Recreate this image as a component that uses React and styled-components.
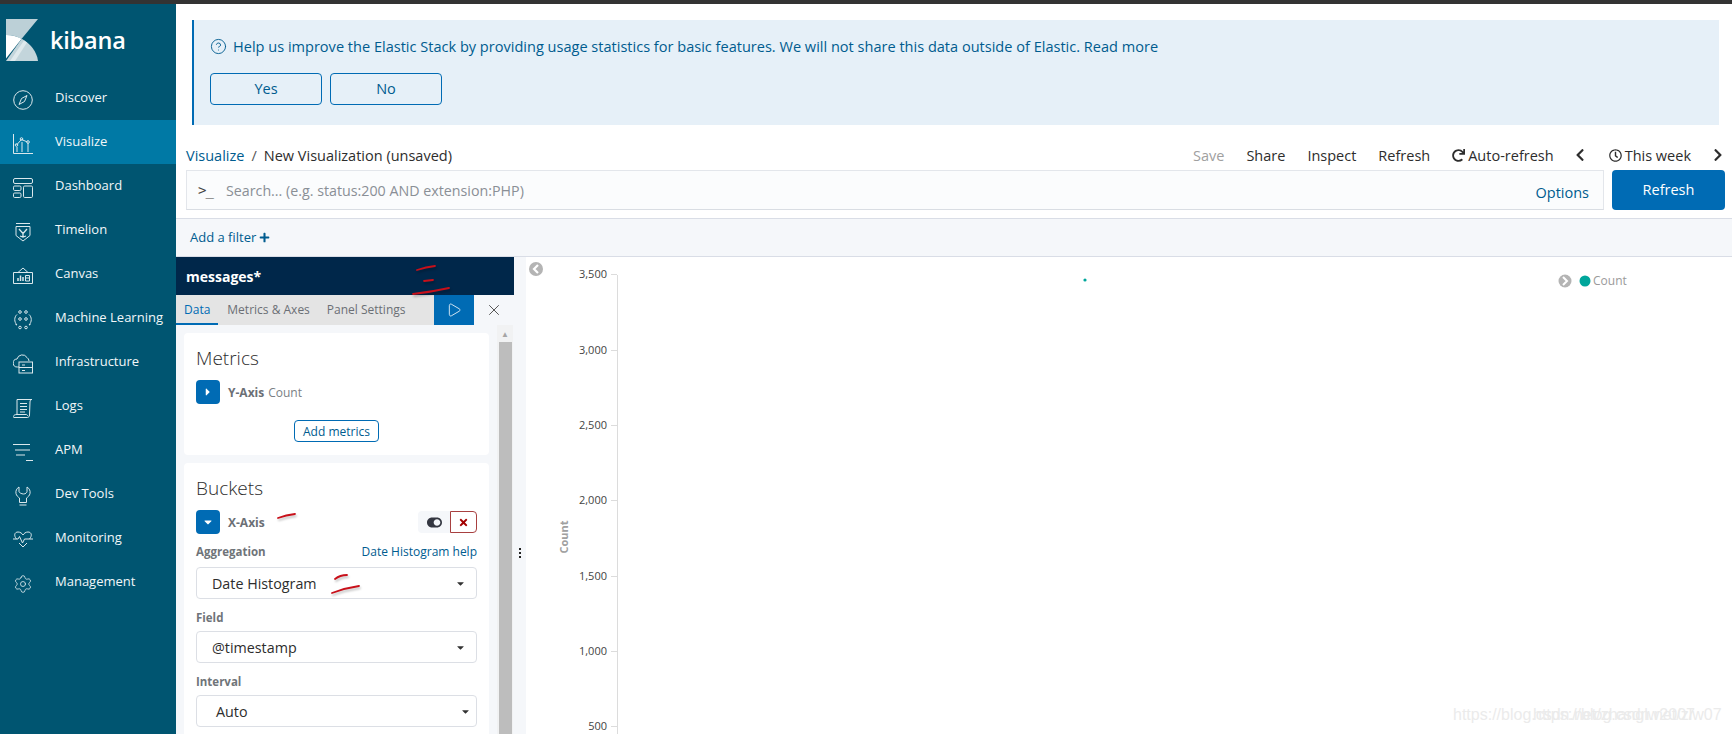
import React from 'react'
import styled, { createGlobalStyle } from 'styled-components'
import { FaCaretDown, FaCaretRight, FaChevronLeft, FaChevronRight, FaPlus, FaRedo, FaRegClock, FaTimes, FaToggleOn } from 'react-icons/fa'
import { CircleHelp, Play, Settings, X } from 'lucide-react'

const GlobalStyle = createGlobalStyle`
html, body { margin: 0; padding: 0; background: #fff; overflow: hidden; }
body { font-family: "Open Sans", "Liberation Sans", sans-serif; color: #2d2d2d; }
`

const Page = styled.div`
position: relative;
width: 1732px;
height: 734px;
overflow: hidden;
display: flex;
flex-direction: column;
`
const TopStrip = styled.div`
height: 4px;
flex: none;
background: #333;
`
const Body = styled.div`
flex: 1;
min-height: 0;
display: flex;
`
const Sidebar = styled.nav`
width: 176px;
flex: none;
background: #005571;
`
const Brand = styled.div`
height: 72px;
display: flex;
align-items: center;
padding-left: 6px;
gap: 12px;
color: #fff;
font-size: 23.5px;
font-weight: 600;
letter-spacing: -0.2px;
`
const NavItem = styled.div`
height: 44px;
box-sizing: border-box;
padding: 0 0 2px 13px;
display: flex;
align-items: center;
gap: 22px;
font-size: 13px;
color: #f2f7f9;
background: ${({ $active }) => ($active ? '#0079a5' : 'transparent')};
svg { flex: none; margin-top: 5px; color: #dbe8ec; }
`
const Main = styled.main`
flex: 1;
min-width: 0;
display: flex;
flex-direction: column;
`
const NoticeWrap = styled.div`
padding: 16px 13px 0 16px;
`
const Notice = styled.div`
height: 105px;
box-sizing: border-box;
border-left: 2px solid #006bb4;
background: #e6f0f8;
padding: 16px 0 0 16px;
`
const NoticeText = styled.div`
display: flex;
align-items: center;
gap: 6px;
height: 20px;
font-size: 14.55px;
color: #005c8f;
`
const NoticeActions = styled.div`
display: flex;
gap: 8px;
margin-top: 17px;
`
const NoticeButton = styled.button`
width: 112px;
height: 32px;
padding: 0 0 2px;
border: 1px solid #006bb4;
border-radius: 4px;
background: transparent;
color: #005c8f;
font: 14.5px "Open Sans", sans-serif;
`
const TopRow = styled.div`
height: 20px;
margin-top: 20px;
padding: 0 7px 0 10px;
display: flex;
align-items: center;
justify-content: space-between;
font-size: 14.5px;
`
const Crumbs = styled.div`
display: flex;
align-items: center;
gap: 7px;
`
const CrumbLink = styled.span`
color: #005c8f;
`
const CrumbSep = styled.span`
color: #555;
`
const Menu = styled.div`
display: flex;
align-items: center;
gap: 22px;
`
const MenuItem = styled.span`
display: flex;
align-items: center;
gap: 3px;
margin-left: ${({ $pull }) => $pull || 0}px;
color: ${({ $muted }) => ($muted ? '#a0a0a0' : '#2d2d2d')};
`
const SearchRow = styled.div`
display: flex;
gap: 8px;
height: 40px;
margin-top: 5px;
padding: 0 7px 0 10px;
`
const SearchBox = styled.div`
flex: 1;
display: flex;
align-items: center;
box-sizing: border-box;
border: 1px solid #e3e6eb;
border-bottom-color: #d9dde3;
background: #fbfcfd;
padding: 0 14px 0 11px;
font-size: 14.25px;
color: #8a8f96;
`
const Prompt = styled.span`
width: 28px;
flex: none;
color: #444;
font: 14px "DejaVu Sans Mono", monospace;
letter-spacing: -1px;
`
const OptionsLink = styled.span`
margin-left: auto;
padding-top: 4px;
font-size: 14.5px;
color: #005c8f;
`
const RefreshButton = styled.button`
width: 113px;
padding: 0 0 2px;
border: 0;
border-radius: 4px;
background: #006bb4;
color: #fff;
font: 14.5px "Open Sans", sans-serif;
`
const FilterBar = styled.div`
height: 37px;
flex: none;
box-sizing: content-box;
margin-top: 8px;
display: flex;
align-items: center;
gap: 3px;
padding: 0 0 0 14px;
background: #f5f7fa;
border-top: 1px solid #d9dde6;
border-bottom: 1px solid #d9dde6;
color: #005c8f;
font-size: 13px;
span { padding-bottom: 2px; }
svg { margin-bottom: 1px; }
`
const Editor = styled.div`
flex: 1;
min-height: 0;
display: flex;
`
const Panel = styled.section`
width: 338px;
flex: none;
display: flex;
flex-direction: column;
background: #f5f7fa;
`
const PanelHead = styled.div`
height: 38px;
flex: none;
display: flex;
align-items: center;
padding-left: 10px;
background: #00274a;
color: #fff;
font-size: 14px;
font-weight: 700;
`
const TabRow = styled.div`
height: 30px;
flex: none;
display: flex;
`
const TabStrip = styled.div`
width: 258px;
display: flex;
background: #e4e4e4;
font-size: 12px;
`
const Tab = styled.div`
display: flex;
align-items: center;
padding: 0 8px;
margin-right: 1px;
color: ${({ $active }) => ($active ? '#006bb4' : '#6b6f75')};
border-bottom: 2px solid ${({ $active }) => ($active ? '#006bb4' : 'transparent')};
`
const RunButton = styled.div`
width: 40px;
display: flex;
align-items: center;
justify-content: center;
background: #006bb4;
color: #dcebf5;
`
const CloseButton = styled.div`
width: 40px;
display: flex;
align-items: center;
justify-content: center;
color: #444;
`
const PanelBody = styled.div`
flex: 1;
min-height: 0;
display: flex;
`
const Cards = styled.div`
width: 305px;
flex: none;
padding: 8px;
display: flex;
flex-direction: column;
gap: 8px;
`
const Card = styled.div`
background: #fff;
border-radius: 4px;
padding: 12px 12px 13px;
`
const CardTitle = styled.h2`
margin: 0;
font-size: 19px;
line-height: 26px;
font-weight: 300;
color: #2d2d2d;
`
const AxisRow = styled.div`
display: flex;
align-items: center;
gap: 8px;
height: 24px;
margin-top: 9px;
font-size: 12px;
color: #7a7f85;
b { color: #6b6f75; font-weight: 700; margin-right: 4px; }
`
const ExpandButton = styled.div`
width: 24px;
height: 24px;
border-radius: 4px;
background: #006bb4;
color: #fff;
display: flex;
align-items: center;
justify-content: center;
font-size: 12px;
`
const AddButton = styled.button`
display: block;
width: 85px;
height: 22px;
margin: 16px auto 0;
padding: 0;
border: 1px solid #006bb4;
border-radius: 4px;
background: #fff;
color: #005c8f;
font: 12px "Open Sans", sans-serif;
`
const RowTools = styled.div`
margin-left: auto;
display: flex;
height: 22px;
`
const ToggleTool = styled.div`
width: 32px;
display: flex;
align-items: center;
justify-content: center;
background: #f5f7fa;
border-radius: 4px 0 0 4px;
color: #343741;
font-size: 15px;
`
const DeleteTool = styled.div`
width: 27px;
box-sizing: border-box;
display: flex;
align-items: center;
justify-content: center;
border: 1px solid #a84040;
border-radius: 0 4px 4px 0;
color: #a30000;
font-size: 11px;
`
const LabelRow = styled.div`
display: flex;
justify-content: space-between;
align-items: center;
height: 18px;
margin-top: ${({ $top }) => $top}px;
margin-bottom: ${({ $bottom }) => $bottom}px;
font-size: 11.5px;
font-weight: 700;
color: #6f7479;
`
const HelpLink = styled.span`
font-size: 12px;
font-weight: 400;
color: #005c8f;
`
const SelectBox = styled.div`
height: 32px;
box-sizing: border-box;
display: flex;
align-items: center;
padding: 0 ${({ $right }) => $right}px 0 ${({ $inset }) => $inset}px;
border: 1px solid #dcdfe5;
border-radius: 4px;
background: #fff;
font-size: 14.3px;
color: #2d2d2d;
svg { margin-left: auto; font-size: 11px; color: #333; }
`
const Track = styled.div`
width: 16px;
flex: none;
background: #f1f2f3;
display: flex;
flex-direction: column;
align-items: center;
`
const TrackArrow = styled.div`
height: 17px;
flex: none;
display: flex;
align-items: center;
justify-content: center;
color: #a5a5a5;
font-size: 8px;
`
const TrackThumb = styled.div`
width: 13px;
flex: 1;
background: #bdbdbd;
`
const Gutter = styled.div`
width: 12px;
flex: none;
display: flex;
align-items: center;
justify-content: center;
padding-top: 114px;
box-sizing: border-box;
background: #f5f7fa;
`
const GutterDots = styled.div`
width: 2px;
height: 12px;
background: radial-gradient(circle, #222 1px, transparent 1.2px) 0 0 / 2px 4px;
`
const Chart = styled.div`
flex: 1;
min-width: 0;
position: relative;
background: #fff;
svg { display: block; }
`
const Watermark = styled.span`
position: absolute;
top: ${({ $top }) => $top}px;
left: ${({ $left }) => $left}px;
font: 16px "Liberation Sans", sans-serif;
color: #ebebeb;
white-space: nowrap;
`
const Scribbles = styled.svg`
position: absolute;
inset: 0;
pointer-events: none;
filter: drop-shadow(1px 2px 1px rgba(0, 0, 0, 0.25));
`

const Icon = ({ children }) => (
  <svg width="20" height="20" viewBox="0 0 20 20" fill="none" stroke="currentColor" strokeWidth="1">{children}</svg>
)

const navIcons = {
  discover: <Icon><circle cx="10" cy="10" r="9.3" /><path d="M14 5.5 11.5 11.5 6 14.5 8.5 8.5Z" /></Icon>,
  visualize: <Icon><path d="M.5 0v19.5H20M4 18v-5M9 18V8M15 18V9" /><path d="M3.5 11 8.500 5.500l6 2.500" /><circle cx="3.500" cy="11" r="1.300" /><circle cx="8.500" cy="5" r="1.300" /><circle cx="15" cy="8" r="1.300" /></Icon>,
  dashboard: <Icon><rect x=".5" y=".5" width="19" height="5" rx="1.500" /><rect x=".5" y="8" width="7.500" height="4.500" rx="1.200" /><rect x=".5" y="15" width="7.500" height="4.500" rx="1.200" /><rect x="10.500" y="8" width="9" height="11.500" rx="1.200" /></Icon>,
  timelion: <Icon><path d="M3 1.500h14M3 4.500h14v9l-7 5.500-7-5.500z" /><path d="M6 7l4 4.500L14 7M10 11.500V15M7 14l3 1 3-1" strokeWidth="1.300" /></Icon>,
  canvas: <Icon><path d="M.5 6.500h19v11h-19zM5 6.500 10 2l5 4.500" /><path d="M5 15v-3M7.500 15V9.500M10 15v-4" strokeWidth="1.500" /><path d="M12.500 9.500h4v5.500h-4zM12.500 12h4" /></Icon>,
  ml: <Icon><circle cx="7" cy="2" r="1.300" /><circle cx="13" cy="2" r="1.300" /><circle cx="7" cy="9" r="1.300" /><circle cx="13" cy="9" r="1.300" /><circle cx="7" cy="17.500" r="1.300" /><circle cx="13" cy="17.500" r="1.300" /><path d="M4 4.500C1 7 1 12 4 15M16 4.500c3 2.500 3 7.500 0 10.500M4 15l-1.500-.5M16 15l1.500-.5" /></Icon>,
  infra: <Icon><path d="M6 13H4.500a4 4 0 0 1-.5-8A5.500 5.500 0 0 1 14 3.500a4.500 4.500 0 0 1 2 3.500" /><rect x="6" y="8" width="13.500" height="11" /><path d="M6 13.500h13.500M9 11h3M9 16.500h3" /></Icon>,
  logs: <Icon><path d="M4 16V1.500h15c-1.500 0-2 1-2 2.500l-.5 13c0 1.500-1 2.500-2 2.500H1c-.5 0-1-.5-.5-1.500C1 17 2 16.500 4 16.500h9.500c.5 0 1 .5 1 1.500" /><path d="M7 5.500h7M7 8.500h7M7 11.500h7M7 14h5" /></Icon>,
  apm: <Icon><path d="M0 2.500h17M2 8h15M3 13h9M13 18.500h7" /></Icon>,
  dev: <Icon><path d="M6 1C3.500 2.500 2.500 5 3 7.500c.4 2 2 3.500 3.500 4.500v4.500h7V12c1.500-1 3.100-2.500 3.500-4.500.5-2.500-.5-5-3-6.500v4.500c0 1-1.500 2.500-3.500 2.500S6 6.500 6 5.500zM6.500 19h7" /></Icon>,
  monitoring: <Icon><path d="M0 9h5l1.500-2.500 3 6.500 2-4h8.500M3.500 9C.5 5.500 1.500 2 5 2c2.500 0 4 1.500 5 3 1-1.500 2.500-3 5-3 3.500 0 4.500 3.500 1.500 7M6 13l4 4 4-4" /></Icon>,
  management: <Settings size={20} strokeWidth={1} />,
}

const navItems = [
  ['Discover', 'discover'],
  ['Visualize', 'visualize'],
  ['Dashboard', 'dashboard'],
  ['Timelion', 'timelion'],
  ['Canvas', 'canvas'],
  ['Machine Learning', 'ml'],
  ['Infrastructure', 'infra'],
  ['Logs', 'logs'],
  ['APM', 'apm'],
  ['Dev Tools', 'dev'],
  ['Monitoring', 'monitoring'],
  ['Management', 'management'],
]

const Logo = () => (
  <svg width="32" height="42" viewBox="0 0 32 42">
    <path d="M0 0h32L15.700 19.800C11 17 5.500 15.800 0 15.900z" fill="#bcd0d7" />
    <path d="M0 15.900c5.500-.1 11 1.100 15.700 3.900L0 39.500z" fill="#fff" />
    <path d="M0 42h32C31 33 24.500 24.800 15.700 19.800z" fill="#c3d5db" />
    <path d="M4 42 18 21.500l3 2L9 42z" fill="#dfe9ec" />
  </svg>
)

const ticks = [
  ['3,500', 17],
  ['3,000', 93],
  ['2,500', 168],
  ['2,000', 243],
  ['1,500', 319],
  ['1,000', 394],
  ['500', 469],
]

const ChartPlot = () => (
  <svg width="1206" height="477" fontFamily='"Open Sans", sans-serif'>
    <circle cx="10" cy="12" r="7" fill="#b4b4b4" />
    <path d="M12 8 8 12l4 4" stroke="#fff" strokeWidth="2.200" fill="none" />
    <path d="M91.500 18V477" stroke="#dcdcdc" />
    {ticks.map(([label, y]) => (
      <g key={label}>
        <path d={`M85 ${y + 0.5}h6`} stroke="#dcdcdc" />
        <text x="81" y={y + 4} textAnchor="end" fontSize="11" fill="#444">{label}</text>
      </g>
    ))}
    <text transform="translate(42 280) rotate(-90)" textAnchor="middle" fontSize="11" fontWeight="700" fill="#a0a0a0">Count</text>
    <circle cx="559" cy="23" r="1.600" fill="#00a69b" />
    <circle cx="1039" cy="24" r="6.500" fill="#b4b4b4" />
    <path d="M1037 20l4 4-4 4" stroke="#fff" strokeWidth="2" fill="none" />
    <circle cx="1059" cy="24" r="5.500" fill="#00a69b" />
    <text x="1067" y="28" fontSize="12" fill="#9a9a9a">Count</text>
  </svg>
)

export default function App() {
  return (
    <Page>
      <GlobalStyle />
      <TopStrip />
      <Body>
        <Sidebar>
          <Brand><Logo />kibana</Brand>
          {navItems.map(([label, key]) => (
            <NavItem key={key} $active={key === 'visualize'}>{navIcons[key]}{label}</NavItem>
          ))}
        </Sidebar>
        <Main>
          <NoticeWrap>
            <Notice>
              <NoticeText>
                <CircleHelp size={17} strokeWidth={1.300} />
                Help us improve the Elastic Stack by providing usage statistics for basic features. We will not share this data outside of Elastic. Read more
              </NoticeText>
              <NoticeActions>
                <NoticeButton>Yes</NoticeButton>
                <NoticeButton>No</NoticeButton>
              </NoticeActions>
            </Notice>
          </NoticeWrap>
          <TopRow>
            <Crumbs>
              <CrumbLink>Visualize</CrumbLink>
              <CrumbSep>/</CrumbSep>
              <span>New Visualization (unsaved)</span>
            </Crumbs>
            <Menu>
              <MenuItem $muted>Save</MenuItem>
              <MenuItem>Share</MenuItem>
              <MenuItem>Inspect</MenuItem>
              <MenuItem>Refresh</MenuItem>
              <MenuItem><FaRedo size={13} />Auto-refresh</MenuItem>
              <MenuItem $pull={-3}><FaChevronLeft size={14} /></MenuItem>
              <MenuItem><FaRegClock size={13} />This week</MenuItem>
              <MenuItem $pull={-2}><FaChevronRight size={14} /></MenuItem>
            </Menu>
          </TopRow>
          <SearchRow>
            <SearchBox>
              <Prompt>&gt;_</Prompt>
              Search... (e.g. status:200 AND extension:PHP)
              <OptionsLink>Options</OptionsLink>
            </SearchBox>
            <RefreshButton>Refresh</RefreshButton>
          </SearchRow>
          <FilterBar><span>Add a filter</span><FaPlus size={11} /></FilterBar>
          <Editor>
            <Panel>
              <PanelHead>messages*</PanelHead>
              <TabRow>
                <TabStrip>
                  <Tab $active>Data</Tab>
                  <Tab>Metrics &amp; Axes</Tab>
                  <Tab>Panel Settings</Tab>
                </TabStrip>
                <RunButton><Play size={16} strokeWidth={1.400} /></RunButton>
                <CloseButton><X size={18} strokeWidth={1.200} /></CloseButton>
              </TabRow>
              <PanelBody>
                <Cards>
                  <Card>
                    <CardTitle>Metrics</CardTitle>
                    <AxisRow>
                      <ExpandButton><FaCaretRight /></ExpandButton>
                      <span><b>Y-Axis</b>Count</span>
                    </AxisRow>
                    <AddButton>Add metrics</AddButton>
                  </Card>
                  <Card>
                    <CardTitle>Buckets</CardTitle>
                    <AxisRow>
                      <ExpandButton><FaCaretDown /></ExpandButton>
                      <b>X-Axis</b>
                      <RowTools>
                        <ToggleTool><FaToggleOn /></ToggleTool>
                        <DeleteTool><FaTimes /></DeleteTool>
                      </RowTools>
                    </AxisRow>
                    <LabelRow $top={8} $bottom={7}>Aggregation<HelpLink>Date Histogram help</HelpLink></LabelRow>
                    <SelectBox $inset={15} $right={10}>Date Histogram<FaCaretDown /></SelectBox>
                    <LabelRow $top={9} $bottom={5}>Field</LabelRow>
                    <SelectBox $inset={15} $right={10}>@timestamp<FaCaretDown /></SelectBox>
                    <LabelRow $top={9} $bottom={5}>Interval</LabelRow>
                    <SelectBox $inset={19} $right={5}>Auto<FaCaretDown /></SelectBox>
                  </Card>
                </Cards>
                <Track>
                  <TrackArrow>&#9650;</TrackArrow>
                  <TrackThumb />
                </Track>
              </PanelBody>
            </Panel>
            <Gutter><GutterDots /></Gutter>
            <Chart>
              <ChartPlot />
              <Watermark $top={449} $left={927}>https://blog.csdn.net/zhanglw2007</Watermark>
              <Watermark $top={449} $left={1007}>https://blog.csdn.net/zlw07</Watermark>
            </Chart>
          </Editor>
        </Main>
      </Body>
      <Scribbles width="1732" height="734" fill="none" stroke="#c8101a" strokeWidth="1.800" strokeLinecap="round">
        <path d="M417 270q9-3 18-4M424 281l9-1M413 294q18-2 36-6M278 518q8-3 17-4M335 579q5-4 12-4M332 593q13-5 27-7" />
      </Scribbles>
    </Page>
  )
}
